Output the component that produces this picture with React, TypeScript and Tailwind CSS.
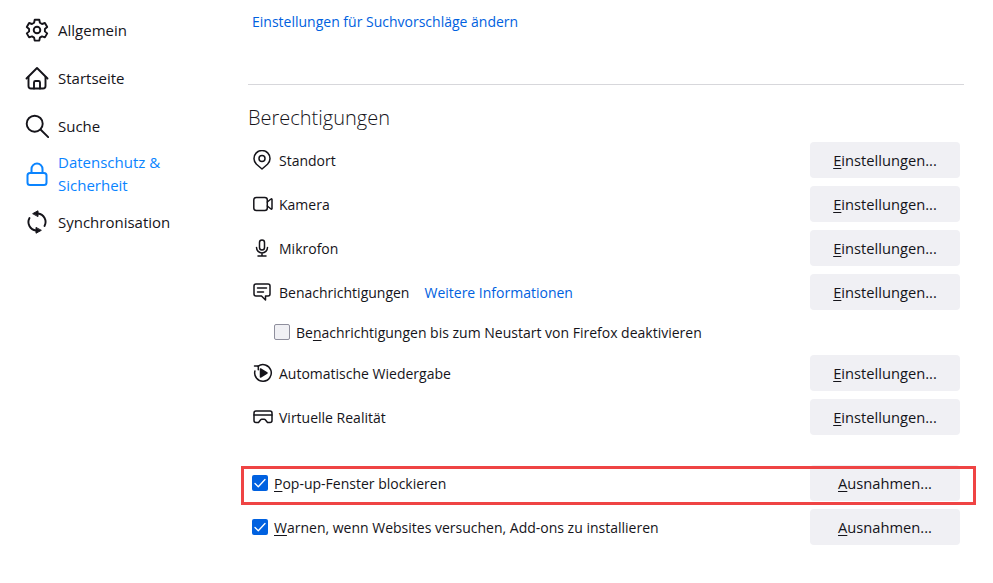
import React from "react";

const sw = { fill: "none", stroke: "currentColor", strokeLinecap: "round", strokeLinejoin: "round" } as const;

const Gear = () => (
  <svg width="24" height="24" viewBox="0 0 24 24" {...sw} strokeWidth={1.9}>
    <path d="M9.7 1.8h4.6l.6 3 2.1 1.2 2.9-1 2.3 4-2.3 2v2.4l2.3 2-2.3 4-2.9-1-2.1 1.2-.6 3H9.700l-.6-3L7 18.400l-2.900 1-2.300-4 2.300-2V11L1.800 9l2.300-4 2.900 1 2.100-1.200z" />
    <circle cx="12" cy="12" r="3.300" />
  </svg>
);
const House = () => (
  <svg width="24" height="24" viewBox="0 0 24 24" {...sw} strokeWidth={1.9}>
    <path d="M1.500 12.500 12 2l10.500 10.500" />
    <path d="M3.500 11v9a2.500 2.500 0 0 0 2.500 2.500h12a2.500 2.500 0 0 0 2.500-2.500v-9" />
    <path d="M9 22.500v-6a1.500 1.500 0 0 1 1.500-1.500h3a1.500 1.500 0 0 1 1.500 1.500v6" />
  </svg>
);
const Search = () => (
  <svg width="24" height="24" viewBox="0 0 24 24" {...sw} strokeWidth={1.9}>
    <circle cx="9.700" cy="9.700" r="8" />
    <path d="m15.500 15.500 7.700 7.700" />
  </svg>
);
const Lock = () => (
  <svg width="24" height="24" viewBox="0 0 24 24" {...sw} strokeWidth={2}>
    <rect x="2.500" y="11" width="19" height="12" rx="2.500" />
    <path d="M6.500 11V7a5.500 5.500 0 0 1 11 0v4" />
  </svg>
);
const Sync = () => (
  <svg width="24" height="24" viewBox="0 0 24 24" {...sw} strokeWidth={1.9} className="overflow-visible">
    <path d="M13 3.500a8.500 8.500 0 0 1 6.500 12.500" />
    <path d="M11 20.500A8.500 8.500 0 0 1 4.500 8" />
    <path d="M8 3.500 13 .8v5.400z" fill="currentColor" strokeWidth={1} />
    <path d="M16 20.500 11 23.200v-5.400z" fill="currentColor" strokeWidth={1} />
  </svg>
);
const Pin = () => (
  <svg width="18" height="20" viewBox="0 0 18 20" {...sw} strokeWidth={1.5}>
    <path d="M9 19 3.500 14.300a8 8 0 1 1 11 0z" />
    <circle cx="9" cy="8.500" r="3" />
  </svg>
);
const Cam = () => (
  <svg width="20" height="16" viewBox="0 0 20 16" {...sw} strokeWidth={1.5}>
    <rect x=".8" y="1.500" width="13.500" height="13" rx="2.500" />
    <path d="m14.300 6 3.700-3a.6.6 0 0 1 1 .5v9a.6.6 0 0 1-1 .5l-3.700-3" />
  </svg>
);
const Mic = () => (
  <svg width="14" height="18" viewBox="0 0 14 18" {...sw} strokeWidth={1.5} className="ml-[2px]">
    <rect x="4.500" y="1" width="5" height="10" rx="2.500" />
    <path d="M1.500 8.500a5.500 5.500 0 0 0 11 0M7 14v3M3 17h8" />
  </svg>
);
const Bell = () => (
  <svg width="18" height="18" viewBox="0 0 18 18" {...sw} strokeWidth={1.5}>
    <path d="M3 1h12a2 2 0 0 1 2 2v8a2 2 0 0 1-2 2h-2.500v4l-4-4H3a2 2 0 0 1-2-2V3a2 2 0 0 1 2-2z" />
    <path d="M4.500 5h9M4.500 9h6" />
  </svg>
);
const Play = () => (
  <svg width="20" height="20" viewBox="0 0 20 20" {...sw} strokeWidth={1.5}>
    <path d="M5 3.300A8.300 8.300 0 1 1 1.900 8" />
    <path d="M1.500 3h3.800v3.800" />
    <path d="M7.500 6v8l6.500-4z" fill="currentColor" />
  </svg>
);
const Vr = () => (
  <svg width="20" height="14" viewBox="0 0 20 14" {...sw} strokeWidth={1.5}>
    <path d="M3 1h14a2 2 0 0 1 2 2v7.500a2 2 0 0 1-2 2h-2.500l-2.200-2.800a1.500 1.500 0 0 0-1.100-.5H8.800a1.500 1.500 0 0 0-1.100.5L5.500 12.500H3a2 2 0 0 1-2-2V3a2 2 0 0 1 2-2z" />
    <path d="M1 5h18" />
  </svg>
);

const Check = () => (
  <span className="flex h-4 w-4 shrink-0 items-center justify-center rounded-[2px] bg-[#0061e0] text-white">
    <svg width="12" height="12" viewBox="0 0 12 12" {...sw} strokeWidth={1.3}>
      <path d="m1 6.500 3.300 3.300L11 2.500" />
    </svg>
  </span>
);

const Btn = ({ k, r }: { k: string; r: string }) => (
  <button className="flex h-9 w-[150px] shrink-0 items-center justify-center rounded-[4px] bg-[#f0f0f4] text-[14.7px] text-[#15141a]">
    <u className="underline-offset-2">{k}</u>
    {r}
  </button>
);

const Row = ({ icon, children }: { icon?: React.ReactNode; children: React.ReactNode }) => (
  <div className="flex h-9 items-center justify-between pr-1">
    <div className="flex items-center">
      {icon && <span className="flex w-[31px] justify-start pl-[5px]">{icon}</span>}
      {children}
    </div>
    <Btn k="E" r="instellungen..." />
  </div>
);

const Nav = ({ icon, active, children }: { icon: React.ReactNode; active?: boolean; children: React.ReactNode }) => (
  <div className={`flex h-12 items-center gap-[9px] pl-[25px] text-[15px] ${active ? "text-[#0a84ff]" : "text-[#15141a]"}`}>
    <span>{icon}</span>
    <span className="leading-[23px]">{children}</span>
  </div>
);

export default function App() {
  return (
    <div className="relative flex h-[583px] w-[993px] overflow-hidden bg-white font-['Open_Sans',sans-serif] text-[14px] text-[#15141a]">
      <aside className="w-[248px] shrink-0 pt-[6px]">
        <Nav icon={<Gear />}>Allgemein</Nav>
        <Nav icon={<House />}>Startseite</Nav>
        <Nav icon={<Search />}>Suche</Nav>
        <Nav icon={<Lock />} active>
          Datenschutz &amp;
          <br />
          Sicherheit
        </Nav>
        <Nav icon={<Sync />}>Synchronisation</Nav>
      </aside>
      <main className="w-[716px] shrink-0">
        <a className="ml-1 mt-[12px] block h-[20px] leading-[20px] text-[#0061e0]">Einstellungen für Suchvorschläge ändern</a>
        <hr className="mt-[52px] border-[#d7d7db]" />
        <h2 className="mt-[18px] h-[29px] text-[20px] leading-[29px] font-light">Berechtigungen</h2>
        <div className="mt-[10px] flex flex-col gap-2">
          <Row icon={<Pin />}>Standort</Row>
          <Row icon={<Cam />}>Kamera</Row>
          <Row icon={<Mic />}>Mikrofon</Row>
          <Row icon={<Bell />}>
            Benachrichtigungen
            <a className="ml-[15px] text-[#0061e0]">Weitere Informationen</a>
          </Row>
        </div>
        <div className="mt-[10px] flex h-[24px] items-center pl-[26px]">
          <span className="mr-[6px] h-4 w-4 rounded-[2px] border border-[#8f8f9d] bg-[#f0f0f4]" />
          <span>
            Be<u className="underline-offset-2">n</u>achrichtigungen bis zum Neustart von Firefox deaktivieren
          </span>
        </div>
        <div className="mt-[11px] flex flex-col gap-2">
          <Row icon={<Play />}>Automatische Wiedergabe</Row>
          <Row icon={<Vr />}>Virtuelle Realität</Row>
        </div>
        <div className="mt-[30px] flex flex-col gap-2">
          <div className="flex h-9 items-center justify-between pr-1">
            <div className="flex items-center gap-[6px] pl-1">
              <Check />
              <span>
                <u className="underline-offset-2">P</u>op-up-Fenster blockieren
              </span>
            </div>
            <Btn k="A" r="usnahmen..." />
          </div>
          <div className="flex h-9 items-center justify-between pr-1">
            <div className="flex items-center gap-[6px] pl-1">
              <Check />
              <span>
                <u className="underline-offset-2">W</u>arnen, wenn Websites versuchen, Add-ons zu installieren
              </span>
            </div>
            <Btn k="A" r="usnahmen..." />
          </div>
        </div>
      </main>
      <div className="absolute left-[241px] top-[466px] h-[39px] w-[735px] border-[3px] border-[#ef4444]" />
    </div>
  );
}
